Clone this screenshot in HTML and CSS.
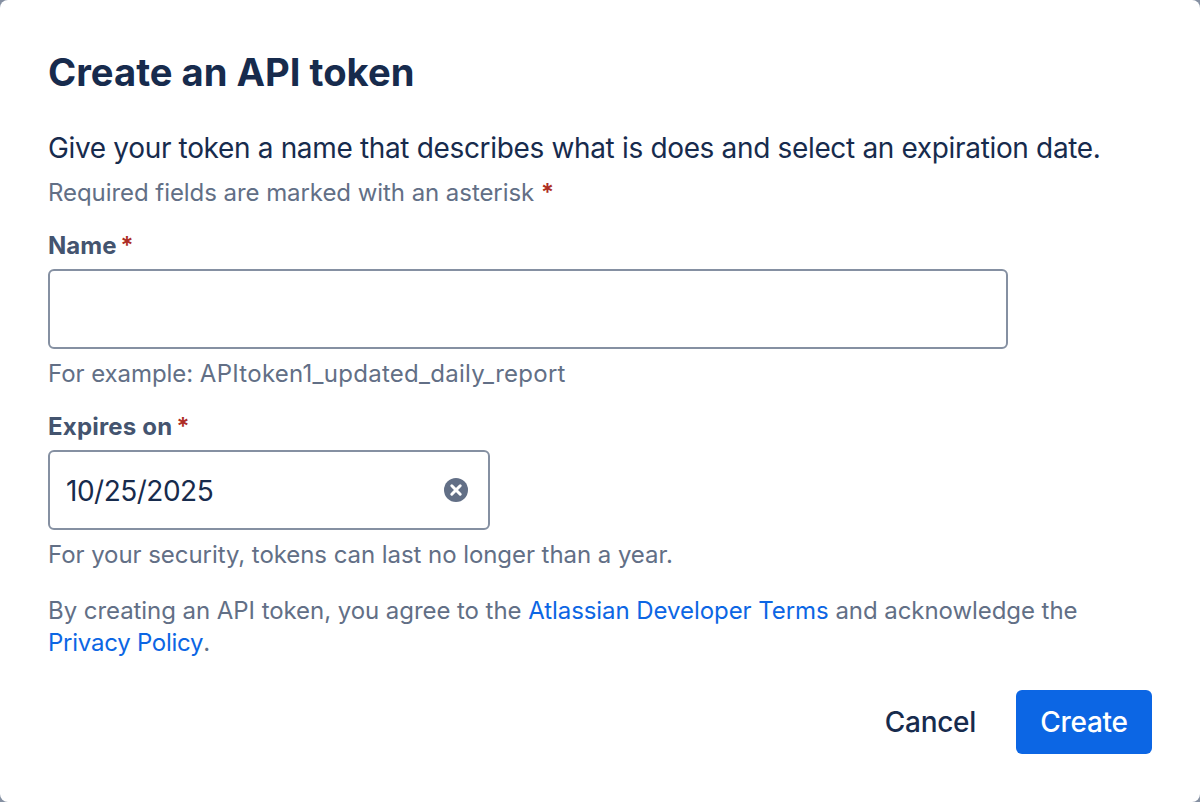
FILE: index.html
```html
<!DOCTYPE html>
<html>
  <head>
    <title>Create an API token</title>
    <meta charset="utf-8" />
    <link rel="stylesheet" href="styles.css">
  </head>
  <body>
    <form class="dialog">
      <h1 class="title">Create an API token</h1>
      <p class="intro">Give your token a name that describes what is does and select an expiration date.</p>
      <p class="hint required-note">Required fields are marked with an asterisk <span class="star">*</span></p>

      <label class="label label-name" for="name">Name<span class="star">*</span></label>
      <input class="field" id="name" type="text" />
      <p class="hint help">For example: <span class="sample">APItoken1_updated_daily_report</span></p>

      <label class="label label-expires" for="expires">Expires on<span class="star">*</span></label>
      <div class="field date-field">
        <input class="date-input" id="expires" type="text" value="10/25/2025" />
        <svg class="clear" width="26" height="26" viewBox="0 0 26 26">
          <circle cx="13" cy="13" r="12" fill="#626f86" />
          <path d="M8.8 8.8l8.4 8.4M17.2 8.8l-8.4 8.4" stroke="#fff" stroke-width="3" stroke-linecap="round" />
        </svg>
      </div>
      <p class="hint help">For your security, tokens can last no longer than a year.</p>

      <p class="hint terms">By creating an API token, you agree to the <a href="#">Atlassian Developer Terms</a> and acknowledge the <a class="policy" href="#">Privacy Policy</a>.</p>

      <div class="actions">
        <button class="btn btn-cancel" type="button">Cancel</button>
        <button class="btn btn-create" type="submit">Create</button>
      </div>
    </form>
  </body>
</html>
```

FILE: styles.css
```css
* {
  box-sizing: border-box;
}
body {
  margin: 0;
  height: 802px;
  overflow: hidden;
  background-color: #8590a2;
  font-family: Inter, "Liberation Sans", sans-serif;
}
.dialog {
  height: 802px;
  padding: 48px 48px 0;
  background-color: #fff;
  border-radius: 8px;
}
.title {
  margin: 0;
  font-size: 38.2px;
  line-height: 48px;
  font-weight: 700;
  color: #172b4d;
}
.intro {
  margin: 36px 0 0;
  font-size: 28px;
  line-height: 32px;
  letter-spacing: -0.34px;
  color: #172b4d;
}
.hint {
  margin: 0;
  font-size: 24px;
  line-height: 32px;
  letter-spacing: -0.06px;
  color: #626f86;
}
.sample {
  letter-spacing: 0.27px;
}
.required-note {
  margin-top: 13px;
}
.star {
  color: #ae2e24;
  font-weight: 600;
}
.label {
  display: block;
  font-size: 24px;
  line-height: 32px;
  font-weight: 700;
  color: #44546f;
}
.label .star {
  margin-left: 4px;
}
.label-name {
  margin-top: 21px;
}
.label-expires {
  margin-top: 21px;
  letter-spacing: 0.2px;
}
.field {
  display: block;
  width: 960px;
  height: 80px;
  margin-top: 7px;
  border: 2px solid #8590a2;
  border-radius: 6px;
  background-color: #fff;
}
.date-field {
  display: flex;
  align-items: center;
  width: 442px;
  padding: 0 19px 0 16px;
}
.date-input {
  flex: 1;
  min-width: 0;
  padding: 1px 0 0;
  border: 0;
  outline: 0;
  font-family: inherit;
  font-size: 28px;
  letter-spacing: -0.5px;
  color: #172b4d;
}
.help {
  margin-top: 9px;
}
.terms {
  margin-top: 24px;
}
.terms a {
  color: #0c66e4;
  text-decoration: none;
}
.terms .policy {
  letter-spacing: -0.25px;
}
.actions {
  display: flex;
  justify-content: flex-end;
  gap: 16px;
  margin-top: 31px;
}
.btn {
  height: 64px;
  padding: 0 24px;
  border: 0;
  border-radius: 6px;
  font-family: inherit;
  font-size: 28px;
  font-weight: 500;
  letter-spacing: -0.3px;
}
.btn-cancel {
  background: none;
  color: #172b4d;
}
.btn-create {
  width: 136px;
  background-color: #0c66e4;
  color: #fff;
}
```
